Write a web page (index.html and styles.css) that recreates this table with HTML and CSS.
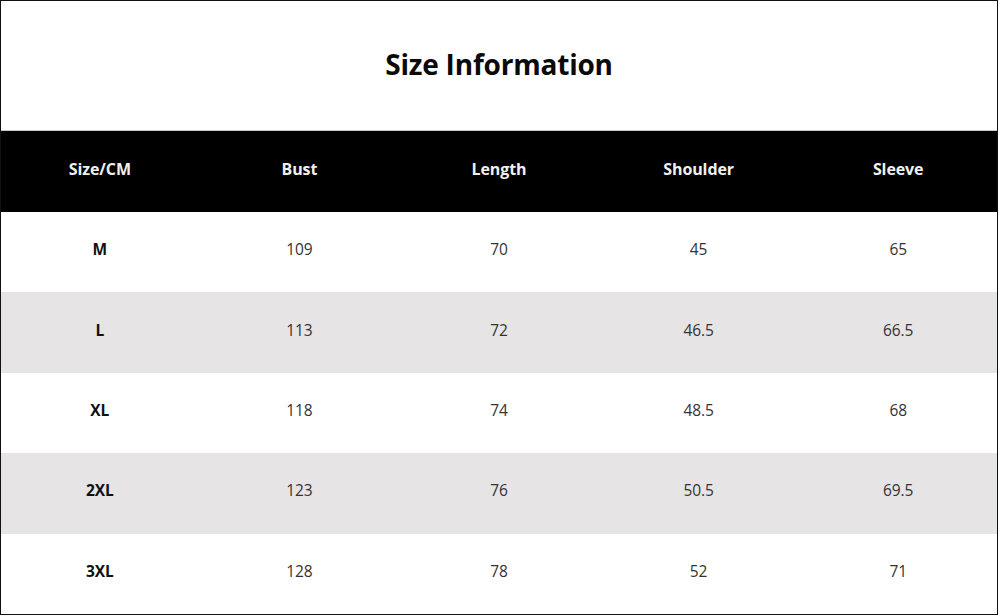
FILE: index.html
```html
<!DOCTYPE html>
<html lang="en">
<head>
<meta charset="utf-8">
<title>Size Information</title>
<link rel="stylesheet" href="styles.css">
</head>
<body>
<div class="sheet">
  <h1 class="title">Size Information</h1>
  <div class="table">
    <div class="row head">
      <div class="cell">Size/CM</div>
      <div class="cell">Bust</div>
      <div class="cell">Length</div>
      <div class="cell">Shoulder</div>
      <div class="cell">Sleeve</div>
    </div>
    <div class="row">
      <div class="cell size">M</div>
      <div class="cell">109</div>
      <div class="cell">70</div>
      <div class="cell">45</div>
      <div class="cell">65</div>
    </div>
    <div class="row alt">
      <div class="cell size">L</div>
      <div class="cell">113</div>
      <div class="cell">72</div>
      <div class="cell">46.5</div>
      <div class="cell">66.5</div>
    </div>
    <div class="row">
      <div class="cell size">XL</div>
      <div class="cell">118</div>
      <div class="cell">74</div>
      <div class="cell">48.5</div>
      <div class="cell">68</div>
    </div>
    <div class="row alt">
      <div class="cell size">2XL</div>
      <div class="cell">123</div>
      <div class="cell">76</div>
      <div class="cell">50.5</div>
      <div class="cell">69.5</div>
    </div>
    <div class="row">
      <div class="cell size">3XL</div>
      <div class="cell">128</div>
      <div class="cell">78</div>
      <div class="cell">52</div>
      <div class="cell">71</div>
    </div>
  </div>
</div>
</body>
</html>
```
FILE: styles.css
```css
* { box-sizing: border-box; }
html, body { margin: 0; padding: 0; background: #fff; }
body { font-family: "Open Sans", "Noto Sans", "Liberation Sans", sans-serif; }

.sheet {
  position: relative;
  width: 998px;
  height: 615px;
  padding: 1px 0;
  display: grid;
  grid-template-rows: 129px 1fr;
  background: #fff;
}

.sheet::after {
  content: "";
  position: absolute;
  inset: 0;
  border: 1px solid #111;
  pointer-events: none;
}

.title {
  margin: 0;
  display: flex;
  align-items: center;
  justify-content: center;
  padding-bottom: 4px;
  font-size: 28px;
  font-weight: 700;
  color: #0a0a0a;
  letter-spacing: -0.2px;
}

.table {
  display: grid;
  grid-template-rows: 81px repeat(5, 1fr);
  border-top: 1px solid #c8c8c8;
}

.row {
  display: grid;
  grid-template-columns: repeat(5, 1fr);
  align-items: center;
  background: #fff;
}

.row.alt { background: #e6e4e5; }

.row.head {
  background: #000;
  font-weight: 700;
}

.cell {
  text-align: center;
  font-size: 15.5px;
  color: #333;
  letter-spacing: -0.1px;
  padding-bottom: 6px;
}

.head .cell { color: #f0f0f0; font-size: 16px; }

.cell.size { font-weight: 700; color: #111; }
```
